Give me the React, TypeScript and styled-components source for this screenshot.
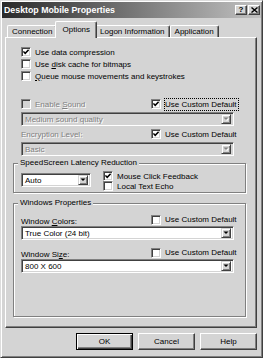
import React from 'react';
import styled, { createGlobalStyle } from 'styled-components';

const GlobalStyle = createGlobalStyle`
    html, body {
        margin: 0;
        padding: 0;
        background: #d4d4d4;
    }
    body {
        font-family: 'Liberation Sans', Arial, sans-serif;
        font-size: 8px;
        color: #000;
    }
    * {
        box-sizing: border-box;
    }
`;

const Window = styled.div`
    width: 263px;
    height: 358px;
    display: flex;
    flex-direction: column;
    background: #d4d4d4;
    border: 1px solid;
    border-color: #dcdcdc #404040 #404040 #dcdcdc;
    box-shadow: inset 1px 1px #fff, inset -1px -1px #808080;
    padding: 1px;
`;

const TitleBar = styled.div`
    height: 16px;
    display: flex;
    align-items: center;
    padding: 0 1px 0 2px;
    background: linear-gradient(to right, #2a2a2a, #c2c2c2);
    color: #fff;
`;

const TitleText = styled.div`
    flex: 1;
    font-size: 8.8px;
    font-weight: bold;
    white-space: nowrap;
`;

const TitleButton = styled.div`
    width: 12px;
    height: 10px;
    margin-left: 1px;
    display: flex;
    align-items: center;
    justify-content: center;
    background: #d4d4d4;
    border: 1px solid;
    border-color: #fff #404040 #404040 #fff;
    box-shadow: inset -1px -1px #808080;
    color: #000;
    font-size: 8px;
    font-weight: bold;
    line-height: 1;
`;

const Body = styled.div`
    flex: 1;
    display: flex;
    flex-direction: column;
    padding: 0 4px 6px 3px;
`;

const TabStrip = styled.div`
    height: 19px;
    display: flex;
    align-items: flex-end;
    padding-left: 2px;
`;

const Tab = styled.div<{ $active?: boolean }>`
    position: relative;
    z-index: ${p => (p.$active ? 1 : 0)};
    display: flex;
    align-items: center;
    height: ${p => (p.$active ? 17 : 12)}px;
    margin: ${p => (p.$active ? '0 -2px -1px' : '0')};
    padding: ${p => (p.$active ? '0 6px 2px' : '0 4px')};
    background: #d4d4d4;
    border: 1px solid;
    border-color: #fff #404040 transparent #fff;
    border-bottom: none;
    border-radius: 2px 2px 0 0;
    box-shadow: inset -1px 0 #808080;
    white-space: nowrap;
`;

const Panel = styled.div`
    flex: 1;
    display: flex;
    flex-direction: column;
    border: 1px solid;
    border-color: #fff #404040 #404040 #fff;
    box-shadow: inset -1px -1px #808080;
    padding: 8px 10px 10px 7px;
`;

const TopSection = styled.div`
    display: flex;
    flex-direction: column;
    padding: 0 12px 0 8px;
`;

const Row = styled.div<{ $height?: number; $top?: number }>`
    display: grid;
    grid-template-columns: 130px 1fr;
    align-items: center;
    height: ${p => p.$height || 12}px;
    margin-top: ${p => p.$top || 0}px;
`;

const CheckLabel = styled.div<{ $disabled?: boolean; $height?: number }>`
    display: flex;
    align-items: center;
    gap: 4px;
    height: ${p => p.$height || 12}px;
    white-space: nowrap;
    color: ${p => (p.$disabled ? '#808080' : '#000')};
    text-shadow: ${p => (p.$disabled ? '1px 1px 0 #fff' : 'none')};
`;

const Box = styled.span<{ $disabled?: boolean }>`
    flex: none;
    width: 10px;
    height: 10px;
    display: flex;
    align-items: center;
    justify-content: center;
    border: 1px solid;
    border-color: #808080 #fff #fff #808080;
    box-shadow: inset 1px 1px #404040, inset -1px -1px #d4d4d4;
    background: ${p => (p.$disabled ? '#d4d4d4' : '#fff')};
`;

const FocusText = styled.span`
    outline: 1px dotted #000;
    outline-offset: 0;
    padding: 1px 1px 1px 0;
`;

const FieldLabel = styled.div<{ $disabled?: boolean; $bottom?: boolean }>`
    align-self: ${p => (p.$bottom ? 'end' : 'center')};
    white-space: nowrap;
    color: ${p => (p.$disabled ? '#808080' : '#000')};
    text-shadow: ${p => (p.$disabled ? '1px 1px 0 #fff' : 'none')};
`;

const SelectBox = styled.div<{ $disabled?: boolean; $width?: number; $top?: number }>`
    flex: none;
    display: flex;
    align-items: center;
    height: 14px;
    width: ${p => (p.$width ? `${p.$width}px` : '100%')};
    margin-top: ${p => p.$top || 0}px;
    border: 1px solid;
    border-color: #808080 #fff #fff #808080;
    box-shadow: inset 1px 1px #404040, inset -1px -1px #d4d4d4;
    background: ${p => (p.$disabled ? '#d4d4d4' : '#fff')};
    padding: 2px;
`;

const SelectText = styled.div<{ $disabled?: boolean }>`
    flex: 1;
    padding-left: 1px;
    white-space: nowrap;
    overflow: hidden;
    color: ${p => (p.$disabled ? '#808080' : '#000')};
    text-shadow: ${p => (p.$disabled ? '1px 1px 0 #fff' : 'none')};
`;

const ArrowButton = styled.div`
    flex: none;
    width: 10px;
    height: 10px;
    display: flex;
    align-items: center;
    justify-content: center;
    background: #d4d4d4;
    border: 1px solid;
    border-color: #d4d4d4 #404040 #404040 #d4d4d4;
    box-shadow: inset 1px 1px #fff, inset -1px -1px #808080;
`;

const Group = styled.div<{ $grow?: boolean; $top?: number; $padTop?: number; $padBottom?: number }>`
    position: relative;
    flex: ${p => (p.$grow ? 1 : 'none')};
    margin-top: ${p => p.$top || 0}px;
    border: 1px solid #808080;
    box-shadow: inset 1px 1px #fff, 1px 1px #fff;
    padding: ${p => p.$padTop || 0}px 11px ${p => p.$padBottom || 0}px 7px;
`;

const GroupTitle = styled.div`
    position: absolute;
    top: -6px;
    left: 4px;
    padding: 0 2px;
    line-height: 10px;
    background: #d4d4d4;
    white-space: nowrap;
`;

const LatencyRow = styled.div`
    display: flex;
    align-items: flex-start;
`;

const CheckColumn = styled.div`
    display: flex;
    flex-direction: column;
    margin-left: 12px;
`;

const ButtonRow = styled.div`
    display: flex;
    justify-content: flex-end;
    gap: 5px;
    margin-top: 5px;
`;

const Button = styled.div<{ $default?: boolean }>`
    width: 57px;
    height: 17px;
    display: flex;
    align-items: center;
    justify-content: center;
    background: #d4d4d4;
    border: 1px solid;
    border-color: ${p => (p.$default ? '#000' : '#fff #404040 #404040 #fff')};
    box-shadow: ${p =>
        p.$default
            ? 'inset 1px 1px #fff, inset -1px -1px #404040, inset -2px -2px #808080'
            : 'inset -1px -1px #808080'};
`;

const Check = ({ disabled }: { disabled?: boolean }) => (
    <svg width="6" height="6" viewBox="0 0 6 6">
        <polyline
            points="0.4,2.4 2.2,4.3 5.6,0.8"
            fill="none"
            stroke={disabled ? '#808080' : '#000'}
            strokeWidth="1.5"
        />
    </svg>
);

const Checkbox = ({ checked, disabled }: { checked?: boolean; disabled?: boolean }) => (
    <Box $disabled={disabled}>{checked && <Check disabled={disabled} />}</Box>
);

const Arrow = ({ disabled }: { disabled?: boolean }) => (
    <svg width="6" height="4" viewBox="0 0 6 4" overflow="visible">
        {disabled && <polygon points="1.5,1.5 6.5,1.5 4,4" fill="#fff" />}
        <polygon points="0.5,0.5 5.5,0.5 3,3" fill={disabled ? '#808080' : '#000'} />
    </svg>
);

const Select = ({ value, disabled, width, top }: { value: string; disabled?: boolean; width?: number; top?: number }) => (
    <SelectBox $disabled={disabled} $width={width} $top={top}>
        <SelectText $disabled={disabled}>{value}</SelectText>
        <ArrowButton>
            <Arrow disabled={disabled} />
        </ArrowButton>
    </SelectBox>
);

const CloseIcon = () => (
    <svg width="7" height="6" viewBox="0 0 7 6">
        <path d="M0.5 0.5 L6.5 5.5 M6.5 0.5 L0.5 5.5" stroke="#000" strokeWidth="1.4" />
    </svg>
);

export default function App() {
    return (
        <>
            <GlobalStyle />
            <Window>
                <TitleBar>
                    <TitleText>Desktop Mobile Properties</TitleText>
                    <TitleButton>?</TitleButton>
                    <TitleButton>
                        <CloseIcon />
                    </TitleButton>
                </TitleBar>

                <Body>
                    <TabStrip>
                        <Tab>Connection</Tab>
                        <Tab $active>Options</Tab>
                        <Tab>Logon Information</Tab>
                        <Tab>Application</Tab>
                    </TabStrip>

                    <Panel>
                        <TopSection>
                            <CheckLabel>
                                <Checkbox checked />
                                Use data compression
                            </CheckLabel>
                            <CheckLabel>
                                <Checkbox />
                                <span>Use <u>d</u>isk cache for bitmaps</span>
                            </CheckLabel>
                            <CheckLabel>
                                <Checkbox />
                                <span><u>Q</u>ueue mouse movements and keystrokes</span>
                            </CheckLabel>

                            <Row $top={16}>
                                <CheckLabel $disabled>
                                    <Checkbox disabled />
                                    <span>Enable <u>S</u>ound</span>
                                </CheckLabel>
                                <CheckLabel>
                                    <Checkbox checked />
                                    <FocusText>Use Custom Default</FocusText>
                                </CheckLabel>
                            </Row>
                            <Select value="Medium sound quality" disabled top={2} />

                            <Row $top={2}>
                                <FieldLabel $disabled>Encryption Level:</FieldLabel>
                                <CheckLabel>
                                    <Checkbox checked />
                                    Use Custom Default
                                </CheckLabel>
                            </Row>
                            <Select value="Basic" disabled top={2} />
                        </TopSection>

                        <Group $top={7} $padTop={7} $padBottom={1}>
                            <GroupTitle>SpeedScreen Latency Reduction</GroupTitle>
                            <LatencyRow>
                                <Select value="Auto" width={70} top={2} />
                                <CheckColumn>
                                    <CheckLabel $height={10}>
                                        <Checkbox checked />
                                        Mouse Click Feedback
                                    </CheckLabel>
                                    <CheckLabel $height={10}>
                                        <Checkbox />
                                        Local Text Echo
                                    </CheckLabel>
                                </CheckColumn>
                            </LatencyRow>
                        </Group>

                        <Group $grow $top={10} $padTop={9}>
                            <GroupTitle>Windows Properties</GroupTitle>
                            <Row $height={13}>
                                <FieldLabel $bottom>
                                    Window <u>C</u>olors:
                                </FieldLabel>
                                <CheckLabel>
                                    <Checkbox />
                                    Use Custom Default
                                </CheckLabel>
                            </Row>
                            <Select value="True Color (24 bit)" />
                            <Row $height={13} $top={6}>
                                <FieldLabel $bottom>
                                    Window Si<u>z</u>e:
                                </FieldLabel>
                                <CheckLabel>
                                    <Checkbox />
                                    Use Custom Default
                                </CheckLabel>
                            </Row>
                            <Select value="800 X 600" />
                        </Group>
                    </Panel>

                    <ButtonRow>
                        <Button $default>OK</Button>
                        <Button>Cancel</Button>
                        <Button>Help</Button>
                    </ButtonRow>
                </Body>
            </Window>
        </>
    );
}
